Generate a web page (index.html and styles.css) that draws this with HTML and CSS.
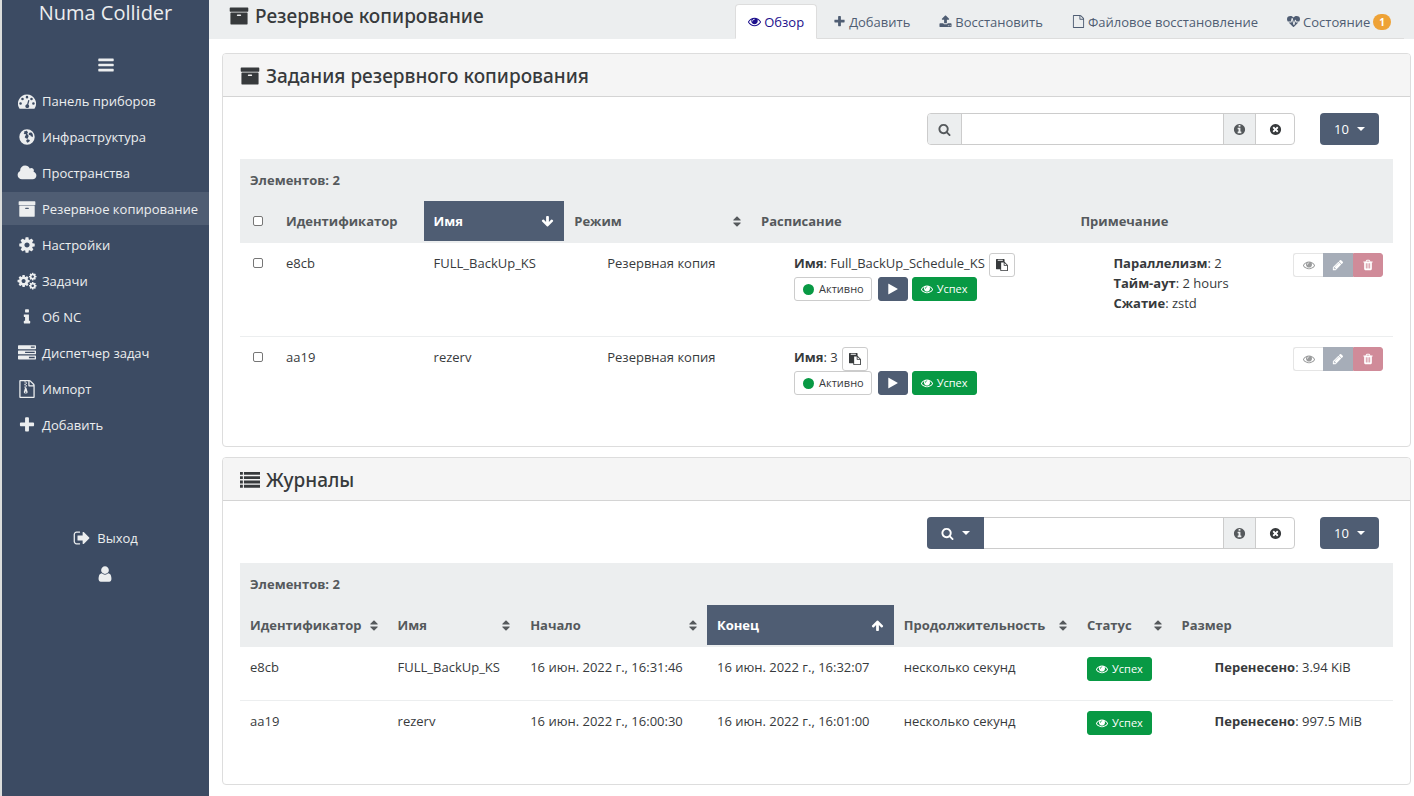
FILE: index.html
```html
<!DOCTYPE html>
<html lang="ru">
<head>
<meta charset="utf-8">
<meta name="viewport" content="width=device-width, initial-scale=1">
<title>Numa Collider</title>
<link rel="stylesheet" href="styles.css">
</head>
<body>
<svg class="sprite" aria-hidden="true">
  <symbol id="i-bars" viewBox="0 0 1792 1792"><path d="M1664 1344v128q0 26-19 45t-45 19h-1408q-26 0-45-19t-19-45v-128q0-26 19-45t45-19h1408q26 0 45 19t19 45zm0-512v128q0 26-19 45t-45 19h-1408q-26 0-45-19t-19-45v-128q0-26 19-45t45-19h1408q26 0 45 19t19 45zm0-512v128q0 26-19 45t-45 19h-1408q-26 0-45-19t-19-45v-128q0-26 19-45t45-19h1408q26 0 45 19t19 45z"/></symbol>
  <symbol id="i-dashboard" viewBox="0 0 1792 1792"><path fill-rule="evenodd" d="M896 256a896 896 0 0 1 755 1379q-19 29-54 29h-1402q-35 0-54-29a896 896 0 0 1 755-1379zM256 1024a128 128 0 1 0 0 256 128 128 0 1 0 0-256zM448 576a128 128 0 1 0 0 256 128 128 0 1 0 0-256zM896 384a128 128 0 1 0 0 256 128 128 0 1 0 0-256zM1344 576a128 128 0 1 0 0 256 128 128 0 1 0 0-256zM1536 1024a128 128 0 1 0 0 256 128 128 0 1 0 0-256zM1069 801q-50-13-63 37l-101 382a192 192 0 1 0 124 32l101-382q9-52-61-69z"/></symbol>
  <symbol id="i-globe" viewBox="0 0 1792 1792"><path fill-rule="evenodd" d="M896 128a768 768 0 1 1 0 1536 768 768 0 1 1 0-1536zM800 290l-150 30-60 90 60 60-90 60 100 90 80-30 60 90-80 110-50 130 110 110 130 40 110-50-20-130 90-90-110-110-60-140 80-120-90-110-60-60zM1130 480l-80 110 50 110 140 30 60 130 80-30 70 90 40-110-20-170-60-120-80-70-90-10zM930 1130l-110 80 20 130 90 120 150-60 110-130-70-110z"/></symbol>
  <symbol id="i-cloud" viewBox="0 0 2048 1792"><path d="M1984 1152q0 159-112.500 271.500t-271.500 112.500h-1088q-185 0-316.500-131.500t-131.500-316.500q0-132 71-241.500t187-163.500q-2-28-2-43 0-212 150-362t362-150q158 0 286.500 88t187.500 230q70-62 166-62 106 0 181 75t75 181q0 75-41 138 129 30 213 134.500t84 239.500z"/></symbol>
  <symbol id="i-archive" viewBox="0 0 1792 1792"><path d="M1088 832q0-26-19-45t-45-19h-256q-26 0-45 19t-19 45 19 45 45 19h256q26 0 45-19t19-45zm576-192v960q0 26-19 45t-45 19h-1408q-26 0-45-19t-19-45v-960q0-26 19-45t45-19h1408q26 0 45 19t19 45zm64-448v256q0 26-19 45t-45 19h-1536q-26 0-45-19t-19-45v-256q0-26 19-45t45-19h1536q26 0 45 19t19 45z"/></symbol>
  <symbol id="i-cog" viewBox="0 0 1792 1792"><path d="M1152 896q0-106-75-181t-181-75-181 75-75 181 75 181 181 75 181-75 75-181zm512-109v222q0 12-8 23t-20 13l-185 28q-19 54-39 91 35 50 107 138 10 12 10 25t-9 23q-27 37-99 108t-94 71q-12 0-26-9l-138-108q-44 23-91 38-16 136-29 186-7 28-36 28h-222q-14 0-24.500-8.500t-11.500-21.500l-28-184q-49-16-90-37l-141 107q-10 9-25 9-14 0-25-11-126-114-165-168-7-10-7-23 0-12 8-23 15-21 51-66.500t54-70.500q-27-50-41-99l-183-27q-13-2-21-12.500t-8-23.500v-222q0-12 8-23t19-13l186-28q14-46 39-92-40-57-107-138-10-12-10-24 0-10 9-23 26-36 98.500-107.500t94.500-71.500q13 0 26 10l138 107q44-23 91-38 16-136 29-186 7-28 36-28h222q14 0 24.500 8.500t11.500 21.500l28 184q49 16 90 37l142-107q9-9 24-9 13 0 25 10 129 119 165 170 7 8 7 22 0 12-8 23-15 21-51 66.500t-54 70.500q26 50 41 98l183 28q13 2 21 12.500t8 23.500z"/></symbol>
  <symbol id="i-cogs" viewBox="0 0 1920 1792"><use href="#i-cog" x="-80" y="200" width="1400" height="1400"/><use href="#i-cog" x="1090" y="20" width="880" height="880"/><use href="#i-cog" x="1090" y="930" width="880" height="880"/></symbol>
  <symbol id="i-info" viewBox="0 0 1792 1792"><path d="M1216 1344v128q0 26-19 45t-45 19h-512q-26 0-45-19t-19-45v-128q0-26 19-45t45-19h64v-384h-64q-26 0-45-19t-19-45v-128q0-26 19-45t45-19h384q26 0 45 19t19 45v576h64q26 0 45 19t19 45zm-128-1152v192q0 26-19 45t-45 19h-256q-26 0-45-19t-19-45v-192q0-26 19-45t45-19h256q26 0 45 19t19 45z"/></symbol>
  <symbol id="i-server" viewBox="0 0 1792 1792"><path fill-rule="evenodd" d="M64 128h1664q64 0 64 64v256q0 64-64 64h-1664q-64 0-64-64v-256q0-64 64-64zM64 640h1664q64 0 64 64v256q0 64-64 64h-1664q-64 0-64-64v-256q0-64 64-64zM64 1152h1664q64 0 64 64v256q0 64-64 64h-1664q-64 0-64-64v-256q0-64 64-64zM1280 256v128h384v-128zM704 768v128h960v-128zM1088 1280v128h576v-128z"/></symbol>
  <symbol id="i-file" viewBox="0 0 1792 1792"><path d="M1596 380q28 28 48 76t20 88v1152q0 40-28 68t-68 28h-1344q-40 0-68-28t-28-68v-1600q0-40 28-68t68-28h896q40 0 88 20t76 48zm-444-244v376h376q-10-29-22-41l-313-313q-12-12-41-22zm384 1528v-1024h-416q-40 0-68-28t-28-68v-416h-768v1536h1280z"/></symbol>
  <symbol id="i-zip" viewBox="0 0 1792 1792"><use href="#i-file" width="1792" height="1792"/><path fill-rule="evenodd" d="M640 128h128v128h-128zM768 256h128v128h-128zM640 384h128v128h-128zM768 512h128v128h-128zM640 640h128v128h-128zM704 768h128l107 349q21 60 21 99 0 128-192 128t-192-128q0-39 21-99zM768 1152q-64 0-64 64t64 64 64-64-64-64z"/></symbol>
  <symbol id="i-plus" viewBox="0 0 1792 1792"><path d="M1600 736v192q0 40-28 68t-68 28h-416v416q0 40-28 68t-68 28h-192q-40 0-68-28t-28-68v-416h-416q-40 0-68-28t-28-68v-192q0-40 28-68t68-28h416v-416q0-40 28-68t68-28h192q40 0 68 28t28 68v416h416q40 0 68 28t28 68z"/></symbol>
  <symbol id="i-signout" viewBox="0 0 1792 1792"><path d="M704 1440q0 4 1 20t.5 26.500-3 23.500-10 19.500-20.500 6.500h-320q-119 0-203.500-84.500t-84.500-203.500v-704q0-119 84.500-203.500t203.500-84.500h320q13 0 22.500 9.500t9.500 22.500q0 4 1 20t.5 26.500-3 23.500-10 19.500-20.500 6.500h-320q-66 0-113 47t-47 113v704q0 66 47 113t113 47h312l11.500 1 11.500 3 8 5.500 7 9 2 13.500zm928-544q0 26-19 45l-544 544q-19 19-45 19t-45-19-19-45v-288h-448q-26 0-45-19t-19-45v-384q0-26 19-45t45-19h448v-288q0-26 19-45t45-19 45 19l544 544q19 19 19 45z"/></symbol>
  <symbol id="i-user" viewBox="0 0 1792 1792"><path d="M1536 1399q0 109-62.500 187t-150.500 78h-854q-88 0-150.500-78t-62.500-187q0-85 8.500-160.500t31.500-152 58.500-131 94-89 134.500-34.500q131 128 313 128t313-128q76 0 134.500 34.500t94 89 58.500 131 31.500 152 8.500 160.500zm-256-887q0 159-112.500 271.500t-271.500 112.500-271.500-112.500-112.500-271.500 112.500-271.500 271.500-112.500 271.500 112.500 112.500 271.500z"/></symbol>
  <symbol id="i-eye" viewBox="0 0 1792 1792"><path d="M1664 960q-152-236-381-353 61 104 61 225 0 185-131.500 316.500t-316.500 131.500-316.500-131.500-131.500-316.500q0-121 61-225-229 117-381 353 133 205 333.500 326.500t434.500 121.500 434.500-121.500 333.500-326.500zm-720-384q0-20-14-34t-34-14q-125 0-214.500 89.500t-89.500 214.500q0 20 14 34t34 14 34-14 14-34q0-86 61-147t147-61q20 0 34-14t14-34zm848 384q0 34-20 69-140 230-376.500 368.500t-499.500 138.500-499.500-139-376.500-368q-20-35-20-69t20-69q140-229 376.500-368t499.500-139 499.500 139 376.500 368q20 35 20 69z"/></symbol>
  <symbol id="i-upload" viewBox="0 0 1792 1792"><path d="M1344 1472q0-26-19-45t-45-19-45 19-19 45 19 45 45 19 45-19 19-45zm256 0q0-26-19-45t-45-19-45 19-19 45 19 45 45 19 45-19 19-45zm128-224v320q0 40-28 68t-68 28h-1472q-40 0-68-28t-28-68v-320q0-40 28-68t68-28h427q21 56 70.500 92t110.500 36h256q61 0 110.500-36t70.500-92h427q40 0 68 28t28 68zm-325-648q-17 40-59 40h-256v448q0 26-19 45t-45 19h-256q-26 0-45-19t-19-45v-448h-256q-42 0-59-40-17-39 14-69l448-448q18-19 45-19t45 19l448 448q31 30 14 69z"/></symbol>
  <symbol id="i-heart" viewBox="0 0 1792 1792"><path d="M1280 1024h305q-5 6-10 10.500t-9 7.500l-3 4-623 600q-18 18-44 18t-44-18l-624-602q-5-2-21-20h369q22 0 39.500-13.500t22.500-34.500l70-281 190 667q6 20 23 33t39 13q21 0 38-13t23-33l146-485 56 112q18 35 57 35zm512-428q0 145-103 300h-369l-111-221q-8-17-25.500-27t-36.500-8q-45 5-56 46l-129 430-196-686q-6-20-23.500-33t-39.500-13-39 13.500-22 34.500l-116 464h-423q-103-155-103-300 0-220 127-344t351-124q62 0 126.500 21.500t120 58 95.500 68.500 76 68q36-36 76-68t95.500-68.500 120-58 126.500-21.500q224 0 351 124t127 344z"/></symbol>
  <symbol id="i-search" viewBox="0 0 1792 1792"><path d="M1216 832q0-185-131.500-316.500t-316.500-131.500-316.500 131.500-131.500 316.500 131.500 316.500 316.500 131.500 316.500-131.500 131.500-316.500zm512 832q0 52-38 90t-90 38q-54 0-90-38l-343-342q-179 124-399 124-143 0-273.500-55.500t-225-150-150-225-55.500-273.500 55.500-273.500 150-225 225-150 273.500-55.500 273.500 55.500 225 150 150 225 55.500 273.500q0 220-124 399l343 343q37 37 37 90z"/></symbol>
  <symbol id="i-infocircle" viewBox="0 0 1792 1792"><path d="M1152 1376v-160q0-14-9-23t-23-9h-96v-512q0-14-9-23t-23-9h-320q-14 0-23 9t-9 23v160q0 14 9 23t23 9h96v320h-96q-14 0-23 9t-9 23v160q0 14 9 23t23 9h448q14 0 23-9t9-23zm-128-896v-160q0-14-9-23t-23-9h-192q-14 0-23 9t-9 23v160q0 14 9 23t23 9h192q14 0 23-9t9-23zm640 416q0 209-103 385.500t-279.500 279.500-385.500 103-385.500-103-279.500-279.500-103-385.500 103-385.500 279.500-279.500 385.500-103 385.500 103 279.500 279.500 103 385.500z"/></symbol>
  <symbol id="i-times" viewBox="0 0 1792 1792"><path d="M1277 1122q0-26-19-45l-181-181 181-181q19-19 19-45 0-27-19-46l-90-90q-19-19-46-19-26 0-45 19l-181 181-181-181q-19-19-45-19-27 0-46 19l-90 90q-19 19-19 46 0 26 19 45l181 181-181 181q-19 19-19 45 0 27 19 46l90 90q19 19 46 19 26 0 45-19l181-181 181 181q19 19 45 19 27 0 46-19l90-90q19-19 19-46zm387-226q0 209-103 385.500t-279.500 279.500-385.500 103-385.500-103-279.500-279.500-103-385.500 103-385.500 279.500-279.500 385.500-103 385.500 103 279.500 279.500 103 385.500z"/></symbol>
  <symbol id="i-sort" viewBox="384 0 1024 1792"><path d="M1408 1088q0 26-19 45l-448 448q-19 19-45 19t-45-19l-448-448q-19-19-19-45t19-45 45-19h896q26 0 45 19t19 45zm0-384q0 26-19 45t-45 19h-896q-26 0-45-19t-19-45 19-45l448-448q19-19 45-19t45 19l448 448q19 19 19 45z"/></symbol>
  <symbol id="i-up" viewBox="0 0 1792 1792"><path d="M1675 971q0 51-37 90l-75 75q-38 38-91 38-54 0-90-38l-294-293v704q0 52-37.500 84.500t-90.500 32.500h-128q-53 0-90.500-32.500t-37.500-84.500v-704l-294 293q-36 38-90 38t-90-38l-75-75q-38-38-38-90 0-53 38-91l651-651q35-37 90-37 54 0 91 37l651 651q37 39 37 91z"/></symbol>
  <symbol id="i-down" viewBox="0 0 1792 1792"><g transform="rotate(180 896 896)"><use href="#i-up" width="1792" height="1792"/></g></symbol>
  <symbol id="i-paste" viewBox="0 0 1792 1792"><path d="M768 1664h896v-640h-416q-40 0-68-28t-28-68v-416h-384v1152zm256-1440v-64q0-13-9.500-22.500t-22.500-9.500h-704q-13 0-22.500 9.500t-9.500 22.500v64q0 13 9.500 22.500t22.500 9.500h704q13 0 22.500-9.500t9.500-22.500zm256 672h299l-299-299v299zm512 128v672q0 40-28 68t-68 28h-960q-40 0-68-28t-28-68v-160h-544q-40 0-68-28t-28-68v-1344q0-40 28-68t68-28h1088q40 0 68 28t28 68v328q21 13 36 28l408 408q28 28 48 76t20 88z"/></symbol>
  <symbol id="i-play" viewBox="0 0 1792 1792"><path d="M1576 927l-1328 738q-23 13-39.500 3t-16.500-36v-1472q0-26 16.500-36t39.500 3l1328 738q23 13 23 31t-23 31z"/></symbol>
  <symbol id="i-pencil" viewBox="0 0 1792 1792"><path d="M491 1536l91-91-235-235-91 91v107h128v128h107zm523-928q0-22-22-22-10 0-17 7l-542 542q-7 7-7 17 0 22 22 22 10 0 17-7l542-542q7-7 7-17zm-54-192l416 416-832 832h-416v-416zm683 96q0 53-37 90l-166 166-416-416 166-165q36-38 90-38 53 0 91 38l235 234q37 39 37 91z"/></symbol>
  <symbol id="i-trash" viewBox="0 0 1792 1792"><path d="M704 1376v-704q0-14-9-23t-23-9h-64q-14 0-23 9t-9 23v704q0 14 9 23t23 9h64q14 0 23-9t9-23zm256 0v-704q0-14-9-23t-23-9h-64q-14 0-23 9t-9 23v704q0 14 9 23t23 9h64q14 0 23-9t9-23zm256 0v-704q0-14-9-23t-23-9h-64q-14 0-23 9t-9 23v704q0 14 9 23t23 9h64q14 0 23-9t9-23zm-544-992h448l-48-117q-7-9-17-11h-317q-10 2-17 11zm928 32v64q0 14-9 23t-23 9h-96v948q0 83-47 143.500t-113 60.500h-832q-66 0-113-58.500t-47-141.500v-952h-96q-14 0-23-9t-9-23v-64q0-14 9-23t23-9h309l70-167q15-37 54-63t79-26h320q40 0 79 26t54 63l70 167h309q14 0 23 9t9 23z"/></symbol>
  <symbol id="i-list" viewBox="0 0 1792 1792"><path d="M0 176h256v256h-256zM0 560h256v256h-256zM0 944h256v256h-256zM0 1328h256v256h-256zM352 176h1440v256h-1440zM352 560h1440v256h-1440zM352 944h1440v256h-1440zM352 1328h1440v256h-1440z"/></symbol>
</svg>

<div class="app">
  <aside class="sidebar">
    <a class="brand" href="#">Numa Collider</a>
    <button class="menu-toggle" type="button" aria-label="Меню"><svg class="icon icon-lg"><use href="#i-bars"/></svg></button>
    <nav class="nav">
      <a class="nav-item" href="#"><svg class="icon icon-lg"><use href="#i-dashboard"/></svg>Панель приборов</a>
      <a class="nav-item" href="#"><svg class="icon icon-lg"><use href="#i-globe"/></svg>Инфраструктура</a>
      <a class="nav-item" href="#"><svg class="icon icon-lg icon-wide"><use href="#i-cloud"/></svg>Пространства</a>
      <a class="nav-item nav-item-active" href="#"><svg class="icon icon-lg"><use href="#i-archive"/></svg>Резервное копирование</a>
      <a class="nav-item" href="#"><svg class="icon icon-lg"><use href="#i-cog"/></svg>Настройки</a>
      <a class="nav-item" href="#"><svg class="icon icon-lg icon-wide"><use href="#i-cogs"/></svg>Задачи</a>
      <a class="nav-item" href="#"><svg class="icon icon-lg"><use href="#i-info"/></svg>Об NC</a>
      <a class="nav-item" href="#"><svg class="icon icon-lg"><use href="#i-server"/></svg>Диспетчер задач</a>
      <a class="nav-item" href="#"><svg class="icon icon-lg"><use href="#i-zip"/></svg>Импорт</a>
      <a class="nav-item" href="#"><svg class="icon icon-lg"><use href="#i-plus"/></svg>Добавить</a>
    </nav>
    <div class="account">
      <a class="account-link" href="#"><svg class="icon icon-lg"><use href="#i-signout"/></svg>Выход</a>
      <a class="account-link" href="#" aria-label="Профиль"><svg class="icon icon-lg"><use href="#i-user"/></svg></a>
    </div>
  </aside>

  <div class="page">
    <header class="page-header">
      <h1 class="title"><svg class="icon icon-title"><use href="#i-archive"/></svg>Резервное копирование</h1>
      <nav class="tabs">
        <a class="tab tab-active" href="#"><svg class="icon"><use href="#i-eye"/></svg>Обзор</a>
        <a class="tab" href="#"><svg class="icon"><use href="#i-plus"/></svg>Добавить</a>
        <a class="tab" href="#"><svg class="icon"><use href="#i-upload"/></svg>Восстановить</a>
        <a class="tab" href="#"><svg class="icon"><use href="#i-file"/></svg>Файловое восстановление</a>
        <a class="tab" href="#"><svg class="icon"><use href="#i-heart"/></svg>Состояние<span class="count">1</span></a>
      </nav>
    </header>

    <main class="content">
      <section class="card">
        <h2 class="card-header title"><svg class="icon icon-title"><use href="#i-archive"/></svg>Задания резервного копирования</h2>
        <div class="card-body">
          <div class="toolbar">
            <div class="search">
              <span class="addon addon-search"><svg class="icon"><use href="#i-search"/></svg></span>
              <input class="search-input" type="text" aria-label="Поиск заданий">
              <span class="addon addon-info"><svg class="icon"><use href="#i-infocircle"/></svg></span>
              <button class="clear" type="button" aria-label="Очистить"><svg class="icon"><use href="#i-times"/></svg></button>
            </div>
            <button class="dark-button page-size" type="button" aria-haspopup="menu">10<span class="caret"></span></button>
          </div>
          <table class="table jobs">
            <colgroup><col class="w-check"><col class="w-id"><col class="w-name"><col class="w-mode"><col class="w-schedule"><col class="w-note"><col></colgroup>
            <thead>
              <tr><th class="total" colspan="7">Элементов: 2</th></tr>
              <tr>
                <th><input class="check" type="checkbox" aria-label="Выбрать все"></th>
                <th>Идентификатор</th>
                <th class="sorted"><span class="head">Имя<svg class="icon"><use href="#i-down"/></svg></span></th>
                <th><span class="head">Режим<svg class="icon icon-sort"><use href="#i-sort"/></svg></span></th>
                <th>Расписание</th>
                <th>Примечание</th>
                <th></th>
              </tr>
            </thead>
            <tbody>
              <tr>
                <td><input class="check" type="checkbox" aria-label="Выбрать e8cb"></td>
                <td>e8cb</td>
                <td>FULL_BackUp_KS</td>
                <td class="indent">Резервная копия</td>
                <td class="indent">
                  <div class="line"><span><b>Имя</b>: Full_BackUp_Schedule_KS</span><button class="button button-copy" type="button" aria-label="Копировать"><svg class="icon"><use href="#i-paste"/></svg></button></div>
                  <div class="actions"><button class="button" type="button"><span class="dot"></span>Активно</button><button class="button button-dark" type="button" aria-label="Запустить"><svg class="icon"><use href="#i-play"/></svg></button><button class="button button-green" type="button"><svg class="icon"><use href="#i-eye"/></svg>Успех</button></div>
                </td>
                <td class="indent"><ul class="facts"><li><b>Параллелизм</b>: 2</li><li><b>Тайм-аут</b>: 2 hours</li><li><b>Сжатие</b>: zstd</li></ul></td>
                <td><div class="group"><button class="button" type="button" disabled aria-label="Просмотр"><svg class="icon"><use href="#i-eye"/></svg></button><button class="button button-dark" type="button" disabled aria-label="Изменить"><svg class="icon"><use href="#i-pencil"/></svg></button><button class="button button-red" type="button" disabled aria-label="Удалить"><svg class="icon"><use href="#i-trash"/></svg></button></div></td>
              </tr>
              <tr>
                <td><input class="check" type="checkbox" aria-label="Выбрать aa19"></td>
                <td>aa19</td>
                <td>rezerv</td>
                <td class="indent">Резервная копия</td>
                <td class="indent">
                  <div class="line"><span><b>Имя</b>: 3</span><button class="button button-copy" type="button" aria-label="Копировать"><svg class="icon"><use href="#i-paste"/></svg></button></div>
                  <div class="actions"><button class="button" type="button"><span class="dot"></span>Активно</button><button class="button button-dark" type="button" aria-label="Запустить"><svg class="icon"><use href="#i-play"/></svg></button><button class="button button-green" type="button"><svg class="icon"><use href="#i-eye"/></svg>Успех</button></div>
                </td>
                <td></td>
                <td><div class="group"><button class="button" type="button" disabled aria-label="Просмотр"><svg class="icon"><use href="#i-eye"/></svg></button><button class="button button-dark" type="button" disabled aria-label="Изменить"><svg class="icon"><use href="#i-pencil"/></svg></button><button class="button button-red" type="button" disabled aria-label="Удалить"><svg class="icon"><use href="#i-trash"/></svg></button></div></td>
              </tr>
            </tbody>
          </table>
        </div>
      </section>

      <section class="card">
        <h2 class="card-header title"><svg class="icon icon-title"><use href="#i-list"/></svg>Журналы</h2>
        <div class="card-body">
          <div class="toolbar">
            <div class="search">
              <button class="dark-button filter" type="button" aria-haspopup="menu" aria-label="Фильтр"><svg class="icon"><use href="#i-search"/></svg><span class="caret"></span></button>
              <input class="search-input" type="text" aria-label="Поиск в журналах">
              <span class="addon addon-info"><svg class="icon"><use href="#i-infocircle"/></svg></span>
              <button class="clear" type="button" aria-label="Очистить"><svg class="icon"><use href="#i-times"/></svg></button>
            </div>
            <button class="dark-button page-size" type="button" aria-haspopup="menu">10<span class="caret"></span></button>
          </div>
          <table class="table logs">
            <colgroup><col class="w-log-id"><col class="w-log-name"><col class="w-date"><col class="w-date"><col class="w-duration"><col class="w-status"><col></colgroup>
            <thead>
              <tr><th class="total" colspan="7">Элементов: 2</th></tr>
              <tr>
                <th><span class="head">Идентификатор<svg class="icon icon-sort"><use href="#i-sort"/></svg></span></th>
                <th><span class="head">Имя<svg class="icon icon-sort"><use href="#i-sort"/></svg></span></th>
                <th><span class="head">Начало<svg class="icon icon-sort"><use href="#i-sort"/></svg></span></th>
                <th class="sorted"><span class="head">Конец<svg class="icon"><use href="#i-up"/></svg></span></th>
                <th><span class="head">Продолжительность<svg class="icon icon-sort"><use href="#i-sort"/></svg></span></th>
                <th><span class="head">Статус<svg class="icon icon-sort"><use href="#i-sort"/></svg></span></th>
                <th>Размер</th>
              </tr>
            </thead>
            <tbody>
              <tr>
                <td>e8cb</td><td>FULL_BackUp_KS</td><td>16 июн. 2022 г., 16:31:46</td><td>16 июн. 2022 г., 16:32:07</td><td>несколько секунд</td>
                <td><button class="button button-green" type="button"><svg class="icon"><use href="#i-eye"/></svg>Успех</button></td>
                <td class="indent"><b>Перенесено</b>: 3.94 KiB</td>
              </tr>
              <tr>
                <td>aa19</td><td>rezerv</td><td>16 июн. 2022 г., 16:00:30</td><td>16 июн. 2022 г., 16:01:00</td><td>несколько секунд</td>
                <td><button class="button button-green" type="button"><svg class="icon"><use href="#i-eye"/></svg>Успех</button></td>
                <td class="indent"><b>Перенесено</b>: 997.5 MiB</td>
              </tr>
            </tbody>
          </table>
        </div>
      </section>
    </main>
  </div>
</div>
</body>
</html>
```
FILE: styles.css
```css
* { box-sizing: border-box; }
body {
  margin: 0;
  font: 13px/20px "Open Sans", "Noto Sans", sans-serif;
  color: #373a3c;
  background: #fff;
}
a { color: inherit; text-decoration: none; }
button, input { font: inherit; color: inherit; margin: 0; }
button { padding: 0; border: 0; background: none; }
b { font-weight: 700; }
.sprite { display: none; }
.icon { width: 13px; height: 13px; flex: none; fill: currentColor; }
.icon-lg { width: 18px; height: 18px; }
.icon-wide { width: 20px; }
.icon-title { width: 20px; height: 20px; }
.icon-sort { width: 8px; }

.app { display: flex; min-height: 100vh; border-left: 2px solid #dcdedc; }
.sidebar {
  flex: 0 0 207px;
  display: flex;
  flex-direction: column;
  align-items: center;
  background: #3c4b63;
  color: #eceeef;
}
.brand { font-size: 20px; line-height: 26px; }
.menu-toggle { display: flex; margin: 30px 0 10px; }
.nav { align-self: stretch; display: grid; gap: 3px; }
.nav-item {
  display: flex;
  align-items: center;
  gap: 6px;
  height: 33px;
  padding-left: 16px;
}
.nav-item .icon-wide { margin: 0 -1px; }
.nav-item-active { background: #4f5d73; }
.account { display: grid; gap: 14px; justify-items: center; margin-top: 86px; }
.account-link { display: flex; align-items: center; gap: 6px; min-height: 22px; }

.page { flex: 1; min-width: 0; }
.page-header {
  display: flex;
  justify-content: space-between;
  height: 39px;
  padding: 0 10px 0 20px;
  background: #eceeef;
}
.title {
  display: flex;
  align-items: center;
  gap: 6px;
  margin: 0;
  font-family: "Noto Sans", "Open Sans", sans-serif;
  font-size: 19px;
  font-weight: 500;
  line-height: 32px;
}
.page-header .title { align-self: flex-start; }
.tabs { display: flex; align-items: flex-end; gap: 3px; box-shadow: inset 0 -1px #ddd; color: #4f5d73; }
.tab {
  display: flex;
  align-items: center;
  gap: 3px;
  height: 35px;
  padding: 0 12px;
  border: 1px solid transparent;
  border-radius: 4px 4px 0 0;
}
.tab-active { color: #1c0f8c; background: #fff; border-color: #ddd #ddd #fff; }
.count {
  padding: 0 6px;
  border-radius: 8px;
  background: #eea236;
  color: #fff;
  font-size: 10px;
  font-weight: 700;
  line-height: 16px;
}

.content { display: grid; gap: 10px; padding: 14px 3px 9px 13px; }
.card { border: 1px solid #ddd; border-radius: 4px; }
.card-header {
  height: 43px;
  padding: 2px 17px 0;
  background: #f5f5f5;
  border-bottom: 1px solid #d4d4d4;
  border-radius: 3px 3px 0 0;
}
.card-body { padding: 16px 17px 17px; }
.toolbar { display: flex; justify-content: flex-end; gap: 25px; margin: 0 14px 14px 0; }
.search { display: flex; width: 368px; height: 32px; border: 1px solid #ccc; border-radius: 4px; }
.addon, .clear { display: flex; align-items: center; justify-content: center; }
.addon { background: #eceeef; color: #55595c; }
.addon-search { width: 34px; border-right: 1px solid #ccc; border-radius: 3px 0 0 3px; }
.addon-info { width: 33px; border: solid #ccc; border-width: 0 1px; }
.search-input { flex: 1; min-width: 0; border: 0; background: #fff; padding: 0 10px; }
.clear { width: 38px; }
.dark-button {
  display: flex;
  align-items: center;
  justify-content: center;
  gap: 8px;
  color: #fff;
  background: #4f5d73;
  border-radius: 4px;
}
.page-size { width: 59px; height: 32px; }
.filter { width: 57px; height: 32px; margin: -1px 0 -1px -1px; border-radius: 4px 0 0 4px; }
.caret { border: 4px solid transparent; border-top-color: currentColor; border-bottom-width: 0; }

.table { width: 100%; table-layout: fixed; border-collapse: separate; border-spacing: 0; }
.table th, .table td { padding: 10px; text-align: left; vertical-align: top; }
.table th { color: #55595c; background: #eceeef; border-bottom: 2px solid #eceeef; }
.table th.total { padding: 11px 10px; border-bottom: 0; }
.table th.sorted { color: #fff; background: #4f5d73; }
.table tr + tr > td { border-top: 1px solid #eceeef; }
.table .indent { padding-left: 43px; }
.jobs td { height: 93px; }
.logs { margin-bottom: 14px; }
.logs td { height: 53px; white-space: nowrap; }
.head { display: flex; align-items: center; justify-content: space-between; }
.w-check { width: 36px; }
.w-id { width: 12.8%; }
.w-name { width: 12.2%; }
.w-mode { width: 16.2%; }
.w-schedule { width: 27.7%; }
.w-note { width: 18%; }
.w-log-id { width: 12.8%; }
.w-log-name { width: 11.5%; }
.w-date { width: 16.2%; }
.w-duration { width: 15.9%; }
.w-status { width: 8.2%; }
.check {
  appearance: none;
  display: block;
  width: 10px;
  height: 10px;
  margin: 5px 3px;
  border: 1px solid #767676;
  border-radius: 2px;
  background: #fff;
}

.line, .actions { display: flex; gap: 4px; white-space: nowrap; }
.actions .button:first-child { margin-right: 2px; }
.facts { list-style: none; margin: 0; padding: 0; white-space: nowrap; }
.button {
  display: flex;
  align-items: center;
  justify-content: center;
  gap: 4px;
  height: 24px;
  padding: 0 7px;
  border: 1px solid #ccc;
  border-radius: 3px;
  background: #fff;
  font-size: 11px;
}
.button .icon { width: 12px; height: 12px; }
.button-copy { padding: 0 6px; }
.button-dark { background: #4f5d73; border-color: #4f5d73; color: #fff; padding: 0 8px; }
.button-green { background: #089944; border-color: #089944; color: #fff; padding: 0 8px; }
.button-red { background: #a31a36; border-color: #a31a36; color: #fff; padding: 0 8px; }
.button:disabled { opacity: 0.5; }
.dot { width: 11px; height: 11px; margin: 0 1px; border-radius: 50%; background: #089944; }
.group { display: flex; justify-content: flex-end; }
.group .button { width: 30px; border-radius: 0; }
.group .button:first-child { border-right: 0; border-radius: 3px 0 0 3px; }
.group .button:last-child { border-radius: 0 3px 3px 0; }
```
